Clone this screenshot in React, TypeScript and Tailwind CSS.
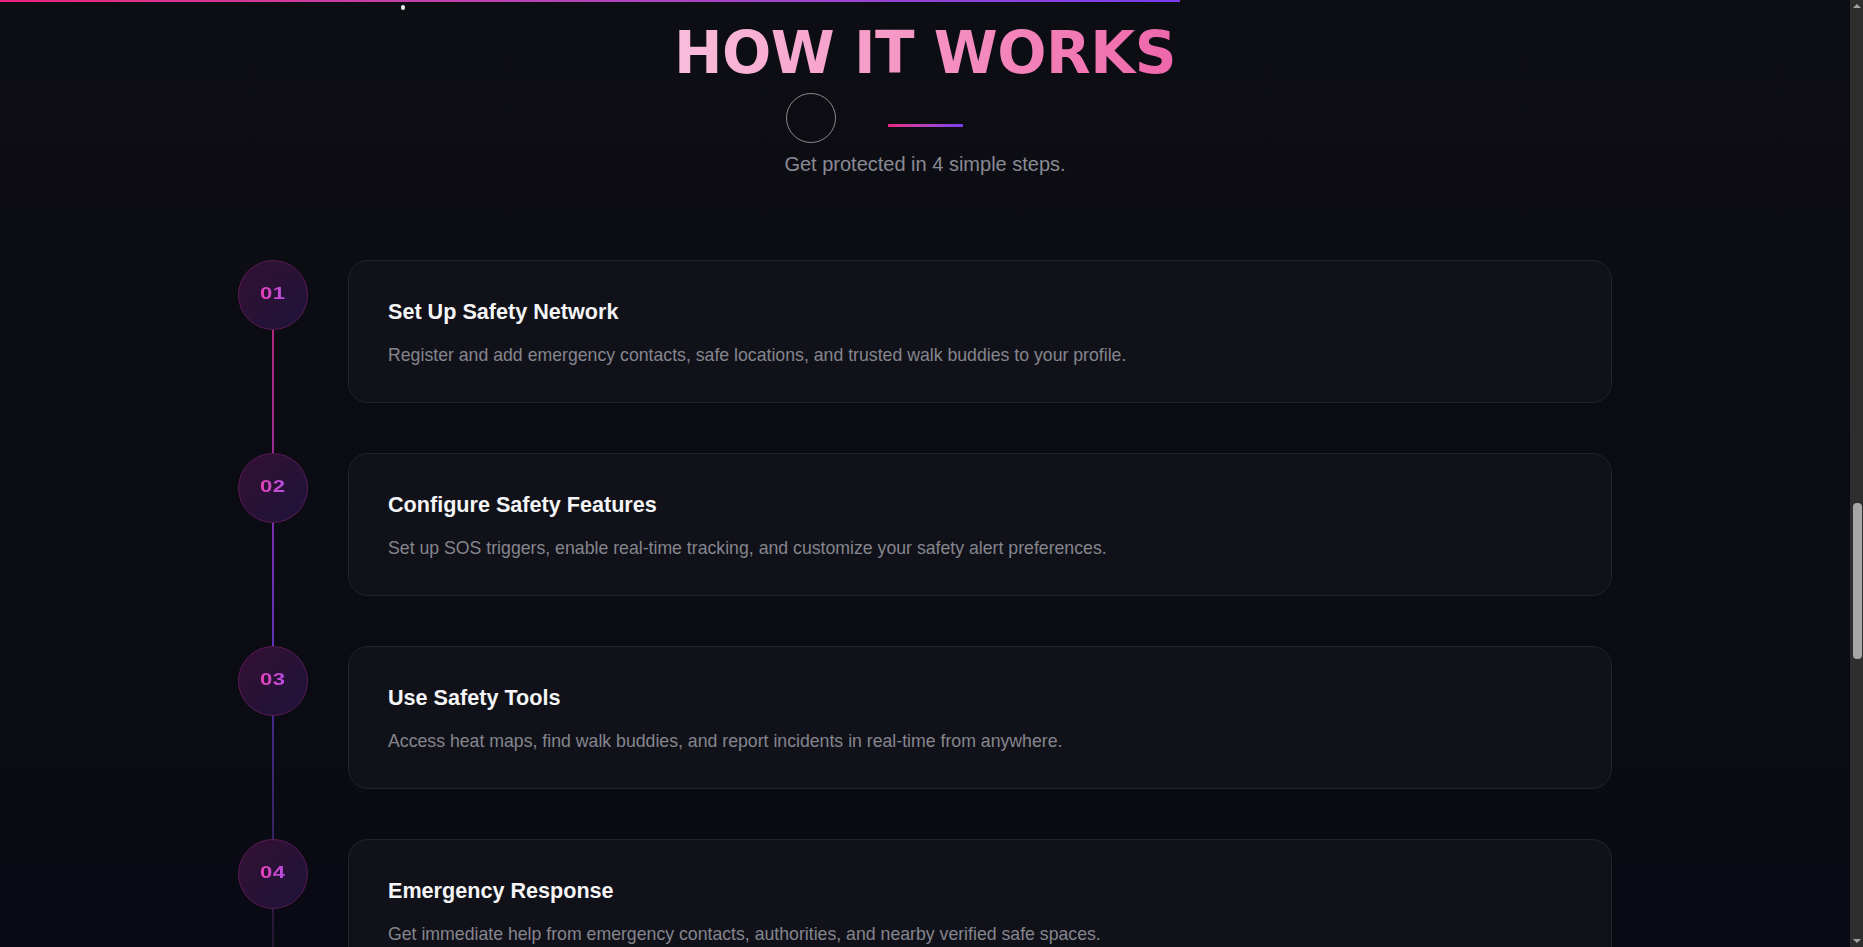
import React from 'react';

// Steps shown on the timeline
const steps = [
  {
    num: '01',
    title: 'Set Up Safety Network',
    text: 'Register and add emergency contacts, safe locations, and trusted walk buddies to your profile.',
    line: 'from-[#b3297f] to-[#9a2a92]',
  },
  {
    num: '02',
    title: 'Configure Safety Features',
    text: 'Set up SOS triggers, enable real-time tracking, and customize your safety alert preferences.',
    line: 'from-[#7a2db0] to-[#5f31b8]',
  },
  {
    num: '03',
    title: 'Use Safety Tools',
    text: 'Access heat maps, find walk buddies, and report incidents in real-time from anywhere.',
    line: 'from-[#46298a] to-[#36225f]',
  },
  {
    num: '04',
    title: 'Emergency Response',
    text: 'Get immediate help from emergency contacts, authorities, and nearby verified safe spaces.',
    line: 'from-[#2e1a3c] to-[#14101c]',
  },
];

const StepRow = ({ step }: { step: (typeof steps)[number] }) => (
  <li className="flex gap-10">
    <div className="flex w-[70px] flex-col items-center">
      <div className="flex h-[70px] w-[70px] shrink-0 items-center justify-center rounded-full border border-[#5a1a54] bg-linear-to-br from-[#321033] to-[#1e1339]">
        <span className="-translate-y-[1px] scale-x-[1.3] bg-linear-to-r from-[#e63fb6] to-[#b64ce4] bg-clip-text text-[17px] font-bold tracking-[0.3px] text-transparent">
          {step.num}
        </span>
      </div>
      <div className={`w-[2px] flex-1 bg-linear-to-b ${step.line}`} />
    </div>
    <div className="flex-1 pb-[50px]">
      <div className="rounded-[20px] border border-[#22232d] bg-[#111219] px-[39px] pt-[37px] pb-[33px]">
        <h3 className="text-[21.6px] font-bold leading-[28px] text-[#f5f5f7]">{step.title}</h3>
        <p className="mt-[15px] text-[17.7px] leading-[28px] text-[#85858e]">{step.text}</p>
      </div>
    </div>
  </li>
);

export default function App() {
  return (
    <div className="flex h-[947px] w-full overflow-hidden bg-[#0b0b14]">
      <main className="relative flex-1 overflow-hidden bg-linear-to-b from-[#0d0e13] to-[#0a0a14] font-['Liberation_Sans',Arial,sans-serif]">
        {/* scroll progress */}
        <div className="h-[2px] w-[1180px] bg-linear-to-r from-[#ec1f7e] to-[#7b3cf0]" />
        <span className="absolute left-[401px] top-[5px] h-[5px] w-[4px] rounded-full bg-white/90" />
        {/* cursor ring */}
        <span className="absolute left-[786px] top-[93px] h-[50px] w-[50px] rounded-full border border-white/50" />

        <section className="flex flex-col items-center">
          <h2 className="mt-[22px] bg-linear-to-r from-[#f9bddb] to-[#ee66ab] bg-clip-text font-['DejaVu_Sans',sans-serif] text-[58px] font-bold leading-[58px] tracking-[-0.5px] text-transparent">
            HOW IT WORKS
          </h2>
          <div className="mt-[42px] h-[3px] w-[75px] bg-linear-to-r from-[#ec1f84] to-[#7c3aed]" />
          <p className="mt-[23px] text-[20px] leading-[28px] text-[#8a8a93]">Get protected in 4 simple steps.</p>
        </section>

        <ol className="mx-auto mt-[82px] w-[1374px]">
          {steps.map((step) => (
            <StepRow key={step.num} step={step} />
          ))}
        </ol>
      </main>

      {/* scrollbar */}
      <div className="flex w-[13px] flex-col items-center bg-[#2e2e2e]">
        <div className="mt-[4px] h-0 w-0 border-x-[4px] border-b-[4px] border-x-transparent border-b-[#a3a3a3]" />
        <div className="mt-[495px] ml-[2px] h-[156px] w-[9px] rounded-[4px] bg-[#a6a6a6]" />
        <div className="mt-auto mb-[4px] h-0 w-0 border-x-[4px] border-t-[4px] border-x-transparent border-t-[#a3a3a3]" />
      </div>
    </div>
  );
}
